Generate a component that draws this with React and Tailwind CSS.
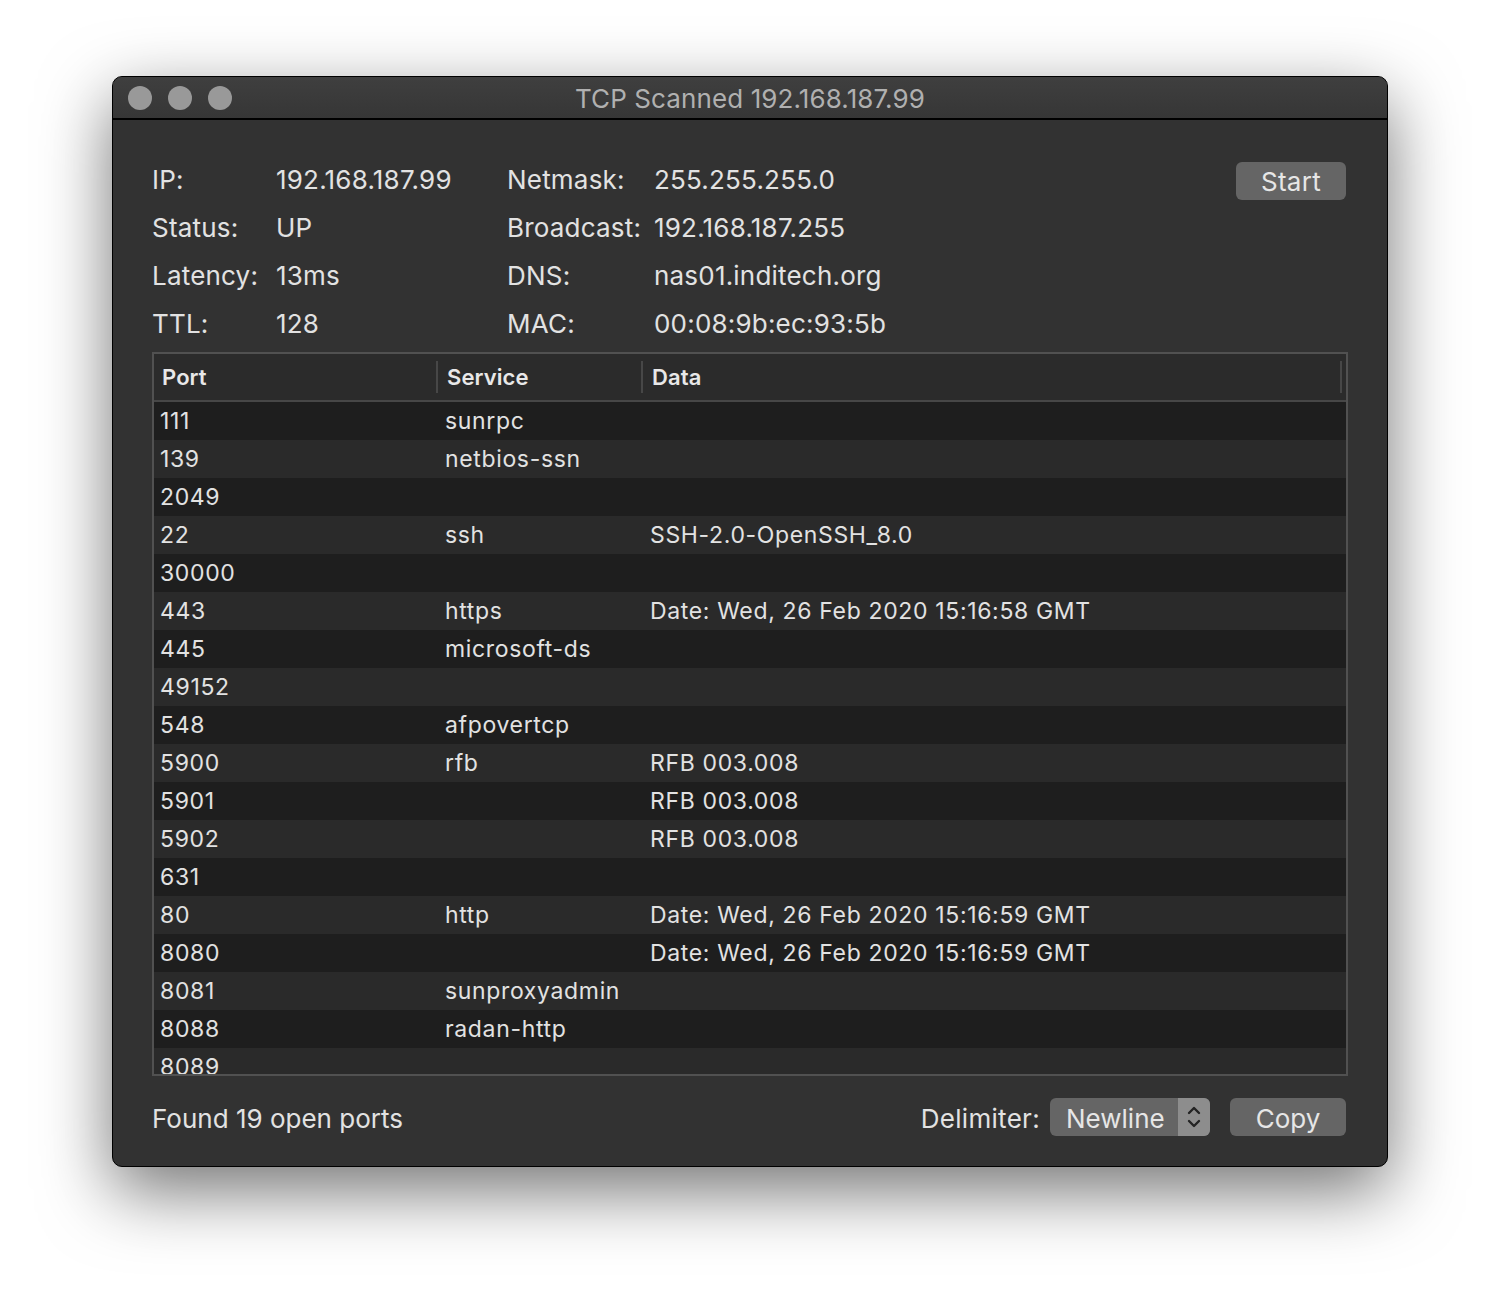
import React from "react";

const info = [
  ["IP:", "192.168.187.99", "Netmask:", "255.255.255.0"],
  ["Status:", "UP", "Broadcast:", "192.168.187.255"],
  ["Latency:", "13ms", "DNS:", "nas01.inditech.org"],
  ["TTL:", "128", "MAC:", "00:08:9b:ec:93:5b"],
];

const ports = [
  ["111", "sunrpc", ""],
  ["139", "netbios-ssn", ""],
  ["2049", "", ""],
  ["22", "ssh", "SSH-2.0-OpenSSH_8.0"],
  ["30000", "", ""],
  ["443", "https", "Date: Wed, 26 Feb 2020 15:16:58 GMT"],
  ["445", "microsoft-ds", ""],
  ["49152", "", ""],
  ["548", "afpovertcp", ""],
  ["5900", "rfb", "RFB 003.008"],
  ["5901", "", "RFB 003.008"],
  ["5902", "", "RFB 003.008"],
  ["631", "", ""],
  ["80", "http", "Date: Wed, 26 Feb 2020 15:16:59 GMT"],
  ["8080", "", "Date: Wed, 26 Feb 2020 15:16:59 GMT"],
  ["8081", "sunproxyadmin", ""],
  ["8088", "radan-http", ""],
  ["8089", "", ""],
];

export default function App() {
  return (
    <div
      className="w-[1500px] h-[1316px] bg-white pl-[112px] pt-[76px]"
      style={{ fontFamily: "Inter, 'Noto Sans', sans-serif" }}
    >
      <div className="w-[1276px] h-[1091px] rounded-[10px] border border-black overflow-hidden shadow-[0_24px_70px_rgba(0,0,0,0.55)] flex flex-col bg-[#323232]">
        {/* title bar */}
        <div className="relative h-[43px] shrink-0 bg-gradient-to-b from-[#3f3f3f] to-[#363636] border-b-2 border-black flex items-center pl-[15px] gap-[16px]">
          <div className="w-[24px] h-[24px] rounded-full bg-[#999999]" />
          <div className="w-[24px] h-[24px] rounded-full bg-[#999999]" />
          <div className="w-[24px] h-[24px] rounded-full bg-[#999999]" />
          <div className="absolute inset-0 pt-[2px] flex items-center justify-center text-[26px] text-[#b0b0b0] tracking-[0.1px]">
            TCP Scanned 192.168.187.99
          </div>
        </div>

        {/* body */}
        <div className="flex-1 flex flex-col px-[39px] pt-[35px] text-[#e2e2e2]">
          <div className="flex">
            <div className="flex flex-col">
              {info.map((r) => (
                <div key={r[0]} className="flex h-[48px] items-center text-[26px] tracking-[0.2px]">
                  <span className="w-[124px]">{r[0]}</span>
                  <span className="w-[231px]">{r[1]}</span>
                  <span className="w-[147px]">{r[2]}</span>
                  <span>{r[3]}</span>
                </div>
              ))}
            </div>
            <div className="ml-auto mr-[2px] pt-[7px]">
              <div className="w-[110px] h-[38px] rounded-[6px] bg-[#656565] flex items-center justify-center text-[26px] tracking-[0.3px] text-[#e6e6e6]">
                Start
              </div>
            </div>
          </div>

          {/* table */}
          <div className="mt-[5px] h-[724px] border-2 border-[#515151] flex flex-col overflow-hidden">
            <div className="h-[48px] shrink-0 bg-[#2b2b2b] border-b-2 border-[#474747] flex items-center text-[22px] font-semibold text-[#e8e8e8] tracking-[0.1px]">
              <div className="w-[282px] pl-[8px]">Port</div>
              <div className="w-[2px] h-[32px] bg-[#474747]" />
              <div className="w-[203px] pl-[9px]">Service</div>
              <div className="w-[2px] h-[32px] bg-[#474747]" />
              <div className="flex-1 pl-[9px]">Data</div>
              <div className="w-[2px] h-[32px] bg-[#474747] mr-[4px]" />
            </div>
            <div className="flex-1 overflow-hidden">
              {ports.map((p, i) => (
                <div
                  key={p[0]}
                  className={
                    "h-[38px] flex items-center text-[23px] tracking-[0.65px] " +
                    (i % 2 === 0 ? "bg-[#1e1e1e]" : "bg-[#2a2a2a]")
                  }
                >
                  <div className="w-[291px] pl-[6px]">{p[0]}</div>
                  <div className="w-[205px]">{p[1]}</div>
                  <div className="flex-1">{p[2]}</div>
                </div>
              ))}
            </div>
          </div>

          {/* footer */}
          <div className="mt-[22px] mr-[2px] flex items-center h-[38px] text-[26px] tracking-[0px]">
            <span className="pt-[3px]">Found 19 open ports</span>
            <span className="ml-auto mr-[10px] pt-[2px] tracking-[0.3px]">Delimiter:</span>
            <div className="w-[160px] h-[38px] rounded-[6px] bg-[#656565] flex overflow-hidden">
              <div className="flex-1 flex items-center pl-[16px] pt-[2px] text-[#e6e6e6]">Newline</div>
              <div className="w-[32px] bg-[#8d8d8d] flex items-center justify-center">
                <svg width="16" height="26" viewBox="0 0 16 26" fill="none" stroke="#232323" strokeWidth="2.4" strokeLinecap="round" strokeLinejoin="round">
                  <path d="M3 9 L8 4 L13 9" />
                  <path d="M3 17 L8 22 L13 17" />
                </svg>
              </div>
            </div>
            <div className="ml-[20px] w-[116px] h-[38px] rounded-[6px] bg-[#656565] flex items-center justify-center pt-[2px] text-[#e6e6e6]">
              Copy
            </div>
          </div>
        </div>
      </div>
    </div>
  );
}
